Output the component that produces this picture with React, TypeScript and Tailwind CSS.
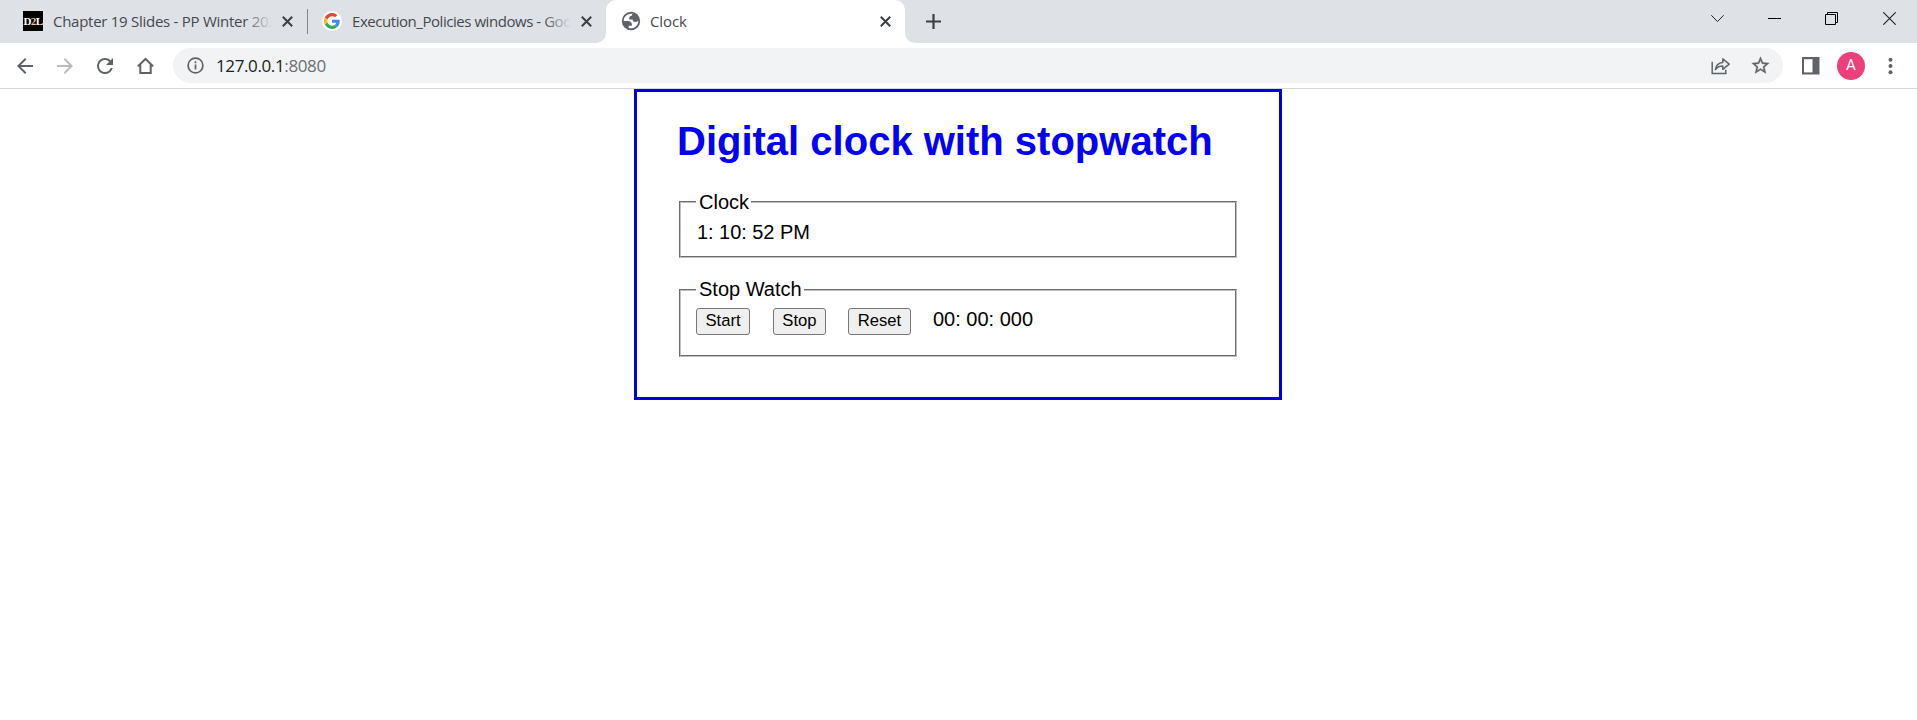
import type { ReactNode } from "react";

function Close() {
  return (
    <svg width="11" height="11" viewBox="0 0 11 11" fill="none" stroke="#3c4043" strokeWidth="2">
      <path d="M0.8 0.8 10.2 10.2M10.2 0.8 0.8 10.2" />
    </svg>
  );
}

function TabTitle({ children, tracking, faded }: { children: ReactNode; tracking: string; faded?: boolean }) {
  return (
    <span className={`relative block h-[22px] w-[219px] overflow-hidden whitespace-nowrap text-[15px] leading-[22px] text-[#45494d] ${tracking}`}>
      {children}
      {faded && <span className="absolute inset-y-0 right-0 w-7 bg-linear-to-r from-transparent to-[#dee1e6]" />}
    </span>
  );
}

function GoogleLogo() {
  return (
    <span className="flex h-5 w-5 items-center justify-center rounded-full bg-white">
      <svg width="16" height="16" viewBox="0 0 48 48">
        <path fill="#EA4335" d="M24 9.5c3.54 0 6.71 1.22 9.21 3.6l6.85-6.85C35.9 2.38 30.47 0 24 0 14.62 0 6.51 5.38 2.56 13.22l7.98 6.19C12.43 13.72 17.74 9.5 24 9.5z" />
        <path fill="#4285F4" d="M46.98 24.55c0-1.57-.15-3.09-.38-4.55H24v9.02h12.94c-.58 2.96-2.26 5.48-4.78 7.18l7.73 6c4.51-4.18 7.09-10.36 7.09-17.65z" />
        <path fill="#FBBC05" d="M10.53 28.59c-.48-1.45-.76-2.99-.76-4.59s.27-3.14.76-4.59l-7.98-6.19C.92 16.46 0 20.12 0 24c0 3.88.92 7.54 2.56 10.78l7.97-6.19z" />
        <path fill="#34A853" d="M24 48c6.48 0 11.93-2.13 15.89-5.81l-7.73-6c-2.15 1.45-4.92 2.3-8.16 2.3-6.26 0-11.57-4.22-13.47-9.91l-7.98 6.19C6.51 42.62 14.62 48 24 48z" />
      </svg>
    </span>
  );
}

function TabStrip() {
  return (
    <div className="flex h-[43px] bg-[#dee1e6]">
      <div className="flex h-[42px] w-[307px] items-center pl-[23px]">
        <span className="flex h-5 w-5 items-center justify-center bg-black font-['Liberation_Serif',serif] text-[11px] font-bold leading-none tracking-[-0.6px] text-white">
          D<span className="text-[#f0c0a4]">2</span>L
        </span>
        <div className="ml-[10px]">
          <TabTitle tracking="tracking-[-0.27px]" faded>Chapter 19 Slides - PP Winter 202</TabTitle>
        </div>
        <span className="ml-[10px]"><Close /></span>
      </div>
      <div className="mt-[9px] h-[25px] w-px bg-[#80868b]" />
      <div className="flex h-[42px] w-[288px] items-center pl-[14px]">
        <GoogleLogo />
        <div className="ml-[10px]">
          <TabTitle tracking="tracking-[-0.45px]" faded>Execution_Policies windows - Goo</TabTitle>
        </div>
        <span className="ml-[10px]"><Close /></span>
      </div>
      <div className="flex h-[43px] w-[10px] bg-white">
        <div className="h-full w-full rounded-br-[10px] bg-[#dee1e6]" />
      </div>
      <div className="flex h-[43px] w-[299px] rounded-t-[10px] bg-white pl-[14px]">
        <div className="flex h-[42px] items-center">
          <svg width="22" height="22" viewBox="0 0 24 24">
            <circle cx="12" cy="12" r="10" fill="#5f6368" />
            <path fill="white" d="M4 12h4.4c3.407.022 4.922 1.73 4.543 5.127H9.488v2.47a8.004 8.004 0 0 0 10.498-8.08C19.327 12.504 18.332 13 17 13c-2.137 0-3.206-.916-3.206-2.75h-3.748c-.274-2.728.683-4.092 2.87-4.092 0-.975.327-1.597.811-1.97A8.004 8.004 0 0 0 4 12z" />
          </svg>
          <div className="ml-2">
            <TabTitle tracking="tracking-[-0.1px]">Clock</TabTitle>
          </div>
          <span className="ml-[11px]"><Close /></span>
        </div>
      </div>
      <div className="flex h-[43px] flex-1 bg-linear-to-r from-white from-[10px] to-[#dee1e6] to-[10px]">
        <div className="flex h-full w-full rounded-bl-[10px] bg-[#dee1e6]">
          <svg className="ml-[21px] mt-[14px]" width="15" height="15" viewBox="0 0 15 15" stroke="#3c4043" strokeWidth="2.2">
            <path d="M7.5 0v15M0 7.5h15" />
          </svg>
          <div className="ml-auto flex h-[37px] items-center gap-[44px] pr-[21px]">
            <svg width="13" height="13" viewBox="0 0 13 13" fill="none" stroke="#222">
              <path d="M0.3 3.2 6.5 9.6 12.7 3.2" />
            </svg>
            <svg width="13" height="13" viewBox="0 0 13 13" fill="none" stroke="#000">
              <path d="M0 6.5h13" />
            </svg>
            <svg width="13" height="13" viewBox="0 0 13 13" fill="none" stroke="#000">
              <path d="M0.5 2.5h10v10h-10zM2.5 2.5v-2h10v10h-2" />
            </svg>
            <svg className="ml-px" width="13" height="13" viewBox="0 0 13 13" fill="none" stroke="#222" strokeWidth="1.1">
              <path d="M0.3 0.3 12.7 12.7M12.7 0.3 0.3 12.7" />
            </svg>
          </div>
        </div>
      </div>
    </div>
  );
}

function Toolbar() {
  return (
    <div className="flex h-[46px] items-center border-b border-[#d5d7da] bg-white">
      <div className="flex items-center gap-[16px] pl-[13px]">
        <svg width="24" height="24" viewBox="0 0 24 24" fill="#5f6368">
          <path d="M20 11H7.83l5.59-5.59L12 4l-8 8 8 8 1.41-1.41L7.83 13H20v-2z" />
        </svg>
        <svg width="24" height="24" viewBox="0 0 24 24" fill="#babcbe">
          <path d="M12 4l-1.41 1.41L16.17 11H4v2h12.17l-5.58 5.59L12 20l8-8z" />
        </svg>
        <svg width="24" height="24" viewBox="0 0 24 24" fill="#5f6368">
          <path d="M17.65 6.35A7.958 7.958 0 0 0 12 4a8 8 0 1 0 7.73 10h-2.08A5.99 5.99 0 0 1 12 18c-3.31 0-6-2.69-6-6s2.69-6 6-6c1.66 0 3.14.69 4.22 1.78L13 11h7V4l-2.35 2.35z" />
        </svg>
        <svg width="24" height="24" viewBox="0 0 24 24" fill="none" stroke="#5f6368" strokeWidth="2">
          <path d="M4.8 12.4 12.5 5l7.7 7.4M7.3 10.6v8.4h10.4v-8.4" />
        </svg>
      </div>
      <div className="ml-[16px] flex h-[35px] w-[1610px] items-center rounded-full bg-[#f1f3f4] pl-[14px] pr-3">
        <svg width="17" height="17" viewBox="0 0 17 17" fill="none" stroke="#5f6368">
          <circle cx="8.5" cy="8.5" r="7.4" strokeWidth="1.7" />
          <path d="M8.5 7.5v5M8.5 4.3v1.9" strokeWidth="1.7" />
        </svg>
        <span className="ml-3 text-[17px] leading-6 tracking-[-0.38px] text-[#202124]">
          127.0.0.1<span className="text-[#6b6f74]">:8080</span>
        </span>
        <svg className="ml-auto" width="20" height="20" viewBox="0 0 20 20" fill="none" stroke="#5f6368" strokeWidth="1.5">
          <path d="M1.2 5.8v11.7h13.6v-3.8" />
          <path d="M4.4 13.6c.5-4.2 3-6.7 7.4-7.1V2.9l6.4 5.3-6.4 5.2V9.9c-3.4 0-5.7 1.1-7.4 3.7z" strokeLinejoin="round" />
        </svg>
        <svg className="ml-[19px]" width="21" height="21" viewBox="0 0 24 24" fill="#5f6368" stroke="#5f6368" strokeWidth="0.4">
          <path d="M22 9.24l-7.19-.62L12 2 9.19 8.63 2 9.24l5.46 4.73L5.82 21 12 17.27 18.18 21l-1.63-7.03L22 9.24zM12 15.4l-3.76 2.27 1-4.28-3.32-2.88 4.38-.38L12 6.1l1.71 4.04 4.38.38-3.32 2.88 1 4.28L12 15.4z" />
        </svg>
      </div>
      <svg className="ml-[19px]" width="18" height="18" viewBox="0 0 18 18">
        <path d="M0 0h17.5v17.5H0z" fill="#5f6368" />
        <path d="M2 2.2h8.5v13.2H2z" fill="white" />
      </svg>
      <span className="ml-[17px] flex h-7 w-7 items-center justify-center rounded-full bg-[#ec407a] font-[Roboto,sans-serif] text-[15px] text-white">A</span>
      <svg className="ml-[23px]" width="5" height="18" viewBox="0 0 5 18" fill="#5f6368">
        <circle cx="2.5" cy="2.8" r="2" />
        <circle cx="2.5" cy="9" r="2" />
        <circle cx="2.5" cy="15.2" r="2" />
      </svg>
    </div>
  );
}

function Panel({ title, size, legend, children }: { title: string; size: string; legend: string; children: ReactNode }) {
  return (
    <fieldset className={`ml-[2px] w-[558px] border-2 border-[#c0c0c0] pl-[15px] pt-[6px] [border-style:groove] ${size}`}>
      <legend className={`pl-[3px] pr-[2px] ${legend}`}>{title}</legend>
      {children}
    </fieldset>
  );
}

function Button({ size, children }: { size: string; children: ReactNode }) {
  return (
    <button className={`h-[27px] rounded-[3px] border border-[#767676] bg-[#efefef] pb-[2px] text-[16.67px] leading-[23px] ${size}`}>
      {children}
    </button>
  );
}

export default function App() {
  return (
    <div className="h-[720px] overflow-hidden bg-white font-['Open_Sans','Noto_Sans',sans-serif]">
      <TabStrip />
      <Toolbar />
      <main className="ml-[634px] h-[311px] w-[648px] border-[3px] border-[#0000dd] pl-10 pt-[26px] font-['Liberation_Sans',Arial,sans-serif] text-[20px] text-black">
        <h1 className="h-[72px] whitespace-nowrap text-[40px] font-bold leading-[46px] text-[#0000f5]">Digital clock with stopwatch</h1>
        <Panel title="Clock" size="h-[68px]" legend="leading-6">
          <p className="pl-px leading-6 tracking-[-0.05px]">1: 10: 52 PM</p>
        </Panel>
        <Panel title="Stop Watch" size="mt-5 h-[79px]" legend="pb-[2px] leading-[22px]">
          <div className="flex items-start leading-[22px]">
            <Button size="w-[54px]">Start</Button>
            <Button size="ml-[23px] w-[53px]">Stop</Button>
            <Button size="ml-[22px] w-[63px]">Reset</Button>
            <span className="ml-[22px]">00: 00: 000</span>
          </div>
        </Panel>
      </main>
    </div>
  );
}
